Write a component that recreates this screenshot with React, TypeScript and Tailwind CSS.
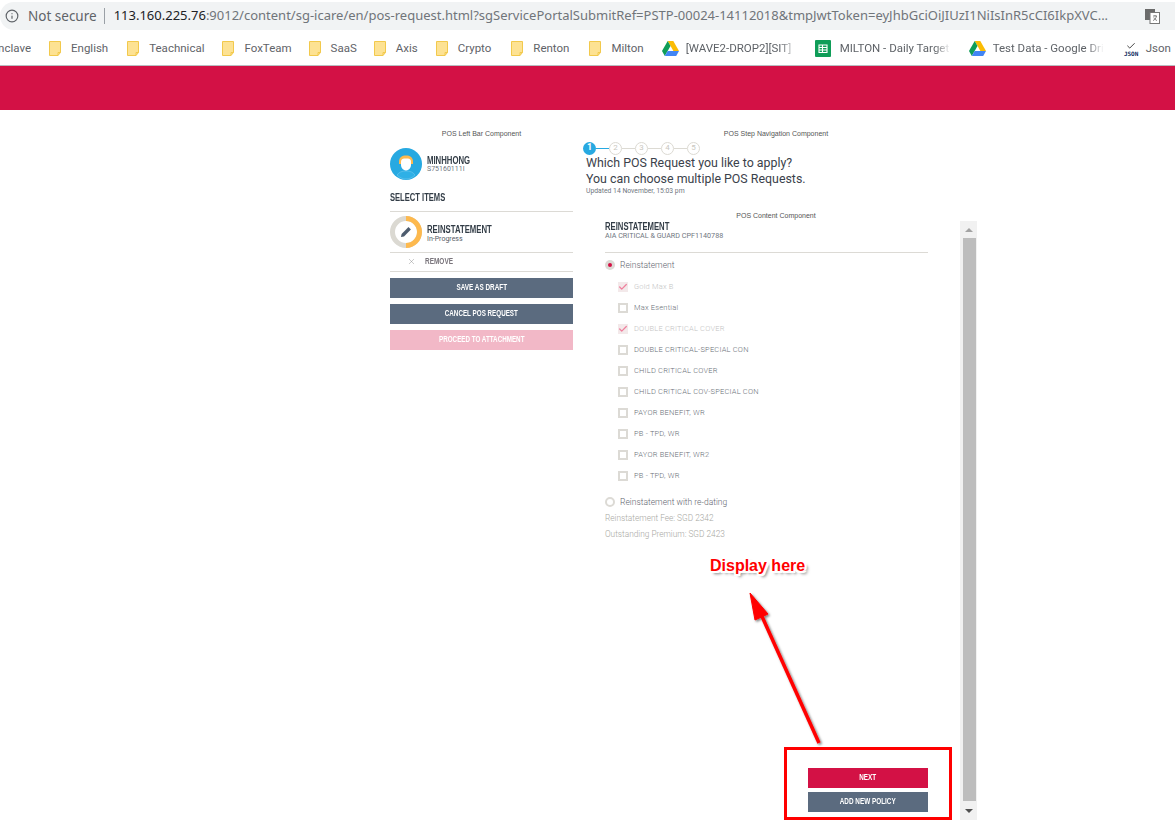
import React from "react";
import { X, Check, Info } from "lucide-react";

const din = "font-['Roboto',sans-serif]";
const cond = "inline-block whitespace-nowrap font-bold font-['Liberation_Sans',sans-serif]";

function Folder() {
  return (
    <svg width="12" height="15" viewBox="0 0 12 15" className="shrink-0">
      <path d="M0.5 0.5H11.5V11.5L9 14.5H0.5Z" fill="#fde293" stroke="#f2c94c" />
      <path d="M9 14.5V11.5H11.5" fill="none" stroke="#f2c94c" />
    </svg>
  );
}

function Drive() {
  return (
    <svg width="17" height="15" viewBox="0 0 17 15" className="shrink-0">
      <path d="M5.7 0H11.3L17 10H11.4Z" fill="#fbbc04" />
      <path d="M5.7 0L0 10L2.8 15L8.5 5Z" fill="#0f9d58" />
      <path d="M5.6 10H17L14.2 15H2.8Z" fill="#4285f4" />
    </svg>
  );
}

function Sheet() {
  return (
    <svg width="16" height="17" viewBox="0 0 16 17" className="shrink-0">
      <rect width="16" height="17" rx="1" fill="#0f9d58" />
      <path d="M4 5H12V12.5H4ZM4 7.5H12M4 10H12M7.5 5V12.5" fill="none" stroke="#fff" strokeWidth="1.1" />
    </svg>
  );
}

function Bookmark({ icon, label, w, className }: { icon: React.ReactNode; label: string; w?: string; className?: string }) {
  return (
    <div className={`flex shrink-0 items-center ${className ?? ""}`}>
      {icon}
      <span className={w ?? "ml-[10px]"}>{label}</span>
    </div>
  );
}

function Step({ n, active }: { n: number; active?: boolean }) {
  return (
    <div
      className={
        active
          ? `flex h-[13px] w-[13px] shrink-0 items-center justify-center rounded-full bg-[#27a9e1] text-[9px] font-bold text-white ${din}`
          : `flex h-[13px] w-[13px] shrink-0 items-center justify-center rounded-full border border-[#dcdad3] text-[8px] text-[#c9c7c0] ${din}`
      }
    >
      {n}
    </div>
  );
}

function Option({ label, checked }: { label: string; checked?: boolean }) {
  return (
    <div className="flex h-[21px] items-center pl-[13px]">
      <div
        className={`flex h-[10px] w-[10px] shrink-0 items-center justify-center border-2 ${
          checked ? "border-[#f3e9ea] bg-[#f3e9ea]" : "border-[#dcdad5] bg-white"
        }`}
      >
        {checked && <Check size={10} strokeWidth={3} className="shrink-0 text-[#ef7f9d]" />}
      </div>
      <span className={`ml-[6px] text-[7.5px] font-light tracking-[0.2px] ${din} ${checked ? "text-[#c4c4c4]" : "text-[#6a7078]"}`}>
        {label}
      </span>
    </div>
  );
}

export default function App() {
  const fade = "overflow-hidden whitespace-nowrap [mask-image:linear-gradient(to_right,black_85%,transparent)]";
  return (
    <div className="relative flex h-[820px] w-[1175px] flex-col overflow-hidden bg-white">
      {/* browser bar */}
      <div className="flex h-[30px] shrink-0 items-end">
        <div className="flex h-[28px] flex-1 items-center rounded-l-full bg-[#f1f3f4] pl-[5px] text-[13.5px] font-['Noto_Sans',sans-serif]">
          <Info size={14} strokeWidth={2} className="text-[#5f6368]" />
          <span className="ml-[9px] text-[#5f6368]">Not secure</span>
          <span className="ml-[7px] h-[16px] w-px bg-[#9aa0a6]" />
          <span className="ml-[9px] w-[1018px] shrink-0 overflow-hidden whitespace-nowrap text-[13px] text-[#70757a]">
            <span className="text-[#202124]">113.160.225.76</span>
            :9012/content/sg-icare/en/pos-request.html?sgServicePortalSubmitRef=PSTP-00024-14112018&amp;tmpJwtToken=eyJhbGciOiJIUzI1NiIsInR5cCI6IkpXVC...
          </span>
          <svg width="15" height="15" viewBox="0 0 15 15" className="ml-[13px] shrink-0">
            <rect x="0" y="0" width="10" height="11" fill="#6b6b6b" />
            <rect x="5" y="3.5" width="9.5" height="11" fill="#fff" stroke="#777" />
            <path d="M8 7H12M10 6V7M11.5 7C11 9.5 9.5 11 8 11.5M8.8 8.5C9.5 10 10.5 11 12 11.5" stroke="#666" fill="none" strokeWidth="0.8" />
          </svg>
        </div>
      </div>
      {/* bookmarks */}
      <div className="flex h-[36px] shrink-0 items-center gap-[18px] overflow-hidden border-b border-[#b8bcc0] pt-[2px] text-[11.5px] text-[#5f6368] font-['Roboto',sans-serif]">
        <div className="flex w-[31px] shrink-0 justify-end overflow-hidden whitespace-nowrap">
          <span>Enclave</span>
        </div>
        <Bookmark icon={<Folder />} label="English" />
        <Bookmark icon={<Folder />} label="Teachnical" className="ml-[1px]" />
        <Bookmark icon={<Folder />} label="FoxTeam" />
        <Bookmark icon={<Folder />} label="SaaS" className="-ml-[1px]" />
        <Bookmark icon={<Folder />} label="Axis" className="-ml-[1px]" />
        <Bookmark icon={<Folder />} label="Crypto" />
        <Bookmark icon={<Folder />} label="Renton" className="ml-[2px]" />
        <Bookmark icon={<Folder />} label="Milton" className="ml-[2px]" />
        <Bookmark icon={<Drive />} label="[WAVE2-DROP2][SIT]" w={`ml-[7px] w-[111px] ${fade}`} />
        <Bookmark icon={<Sheet />} label="MILTON - Daily Target" w={`ml-[9px] w-[111px] ${fade}`} />
        <Bookmark icon={<Drive />} label="Test Data - Google Drive" w={`ml-[7px] w-[111px] ${fade}`} />
        <div className="flex shrink-0 items-center">
          <div className="flex w-[19px] flex-col items-center leading-none">
            <Check size={10} strokeWidth={2} className="text-[#222]" />
            <span className="text-[6px] font-bold text-[#0b2a5c] font-['DejaVu_Sans_Mono',monospace]">JSON</span>
          </div>
          <span className="ml-[5px]">Json</span>
        </div>
      </div>
      {/* red header */}
      <div className="h-[44px] shrink-0 bg-[#d31145]" />
      {/* page */}
      <div className="flex min-h-0 flex-1 pl-[390px]">
        {/* left bar */}
        <div className="w-[183px] shrink-0 pt-[20px]">
          <div className="h-[8px] text-center text-[7px] leading-[8px] text-[#555] font-['Liberation_Sans',sans-serif]">
            POS Left Bar Component
          </div>
          <div className="mt-[10px] flex h-[32px] items-start">
            <svg width="32" height="32" viewBox="0 0 32 32" className="shrink-0">
              <circle cx="16" cy="16" r="16" fill="#27a9e1" />
              <path d="M9 14C9 9 12 7.5 16 7.5S23 9 23 14V16H9Z" fill="#fdb94e" />
              <path d="M11 13.5C11 11 13 10.5 16 10.5S21 11 21 13.5V17C21 20 18.5 22.5 16 22.5S11 20 11 17Z" fill="#fff" />
              <path d="M7 27C9 24 12 23 16 23S23 24 25 27C22 30 19 31 16 31S10 30 7 27Z" fill="#2fb0e6" stroke="#7fcdee" strokeWidth="0.5" />
            </svg>
            <div className="ml-[5px] pt-[4px]">
              <div className="h-[12px] leading-[12px]">
                <span className={`${cond} origin-left scale-x-[.675] text-[11.5px] text-[#333d47]`}>MINHHONG</span>
              </div>
              <div className={`mt-[1px] text-[7px] leading-[8px] text-[#6f7680] ${din}`}>S75160111I</div>
            </div>
          </div>
          <div className="mt-[9px] h-[12px] leading-[12px]">
            <span className={`${cond} origin-left scale-x-[.66] text-[11.5px] text-[#333d47]`}>SELECT ITEMS</span>
          </div>
          <div className="mt-[10px] flex h-[42px] items-center border-y border-[#dcdad5]">
            <div className="relative flex h-[32px] w-[32px] shrink-0 items-center justify-center">
              <svg width="32" height="32" viewBox="0 0 32 32" className="absolute inset-0">
                <circle cx="16" cy="16" r="13.5" fill="none" stroke="#dbd9d2" strokeWidth="5" />
                <path d="M16 2.5A13.5 13.5 0 0 1 16 29.5" fill="none" stroke="#fdb94e" strokeWidth="5" />
                <path d="M11 21L11.6 18L18.5 11.1L20.9 13.5L14 20.4Z" fill="#4d5c6e" />
              </svg>
            </div>
            <div className="ml-[5px]">
              <div className="h-[12px] leading-[12px]">
                <span className={`${cond} origin-left scale-x-[.675] text-[11.5px] text-[#333d47]`}>REINSTATEMENT</span>
              </div>
              <div className={`mt-[2px] text-[7px] leading-[8px] text-[#565d66] ${din}`}>In-Progress</div>
            </div>
          </div>
          <div className="flex h-[19px] items-center border-b border-[#dcdad5] pb-[2px] pl-[17px]">
            <X size={9} strokeWidth={1} className="text-[#777]" />
            <span className={`${cond} ml-[9px] origin-left scale-x-[.68] text-[9.5px] text-[#7a757c]`}>REMOVE</span>
          </div>
          <div className="mt-[6px] flex flex-col gap-[6px] text-[9.5px] text-white">
            <div className="flex h-[20px] items-center justify-center bg-[#5b6b7f] pb-[2px]">
              <span className={`${cond} scale-x-[.67]`}>SAVE AS DRAFT</span>
            </div>
            <div className="flex h-[20px] items-center justify-center bg-[#5b6b7f] pb-[2px]">
              <span className={`${cond} scale-x-[.66]`}>CANCEL POS REQUEST</span>
            </div>
            <div className="flex h-[20px] items-center justify-center bg-[#f2b8c7] pb-[2px]">
              <span className={`${cond} scale-x-[.66]`}>PROCEED TO ATTACHMENT</span>
            </div>
          </div>
        </div>
        {/* right */}
        <div className="ml-[11px] flex w-[394px] shrink-0 flex-col pt-[20px]">
          <div className="pr-[10px] text-center text-[7px] leading-[8px] text-[#555] font-['Liberation_Sans',sans-serif]">
            POS Step Navigation Component
          </div>
          <div className="-ml-[1px] mt-[3px] flex h-[14px] items-center">
            <Step n={1} active />
            <div className="h-px w-[13px] bg-[#27a9e1]" />
            <Step n={2} />
            <div className="h-px w-[13px] bg-[#dcdad3]" />
            <Step n={3} />
            <div className="h-px w-[13px] bg-[#dcdad3]" />
            <Step n={4} />
            <div className="h-px w-[13px] bg-[#dcdad3]" />
            <Step n={5} />
          </div>
          <div className={`ml-[2px] text-[12.4px] leading-[16px] text-[#3b424b] ${din}`}>
            <div>Which POS Request you like to apply?</div>
            <div>You can choose multiple POS Requests.</div>
          </div>
          <div className={`ml-[2px] h-[8px] text-[6.8px] leading-[8px] text-[#6f7680] ${din}`}>Updated 14 November, 15:03 pm</div>
          <div className="mt-[17px] pr-[10px] text-center text-[7px] leading-[8px] text-[#555] font-['Liberation_Sans',sans-serif]">
            POS Content Component
          </div>
          {/* panel */}
          <div className="mt-[1px] flex min-h-0 flex-1">
            <div className="flex w-[376px] flex-col">
              <div className="ml-[21px] mr-[32px] flex flex-1 flex-col">
                <div className="mt-[-3px] h-[12px] leading-[12px]">
                  <span className={`${cond} origin-left scale-x-[.67] text-[11.5px] text-[#333d47]`}>REINSTATEMENT</span>
                </div>
                <div className={`mt-[2px] text-[7.2px] leading-[8px] text-[#6f7680] ${din}`}>AIA CRITICAL &amp; GUARD CPF1140788</div>
                <div className="mt-[12px] border-t border-[#dcdad5]" />
                <div className="mt-[6px] flex h-[12px] items-center">
                  <div className="flex h-[10px] w-[10px] shrink-0 items-center justify-center rounded-full bg-[#dcdad5]">
                    <div className="h-[4px] w-[4px] rounded-full bg-[#d31145]" />
                  </div>
                  <span className={`ml-[5px] text-[8.5px] font-light text-[#5f666f] ${din}`}>Reinstatement</span>
                </div>
                <div className="mt-[5px]">
                  <Option label="Gold Max B" checked />
                  <Option label="Max Esential" />
                  <Option label="DOUBLE CRITICAL COVER" checked />
                  <Option label="DOUBLE CRITICAL-SPECIAL CON" />
                  <Option label="CHILD CRITICAL COVER" />
                  <Option label="CHILD CRITICAL COV-SPECIAL CON" />
                  <Option label="PAYOR BENEFIT, WR" />
                  <Option label="PB - TPD, WR" />
                  <Option label="PAYOR BENEFIT, WR2" />
                  <Option label="PB - TPD, WR" />
                </div>
                <div className="mt-[10px] flex h-[12px] items-center">
                  <div className="h-[10px] w-[10px] shrink-0 rounded-full border-2 border-[#dcdad5]" />
                  <span className={`ml-[5px] text-[8.5px] font-light text-[#5f666f] ${din}`}>Reinstatement with re-dating</span>
                </div>
                <div className={`mt-[2px] h-[16px] text-[8.3px] font-light leading-[16px] text-[#a8a8a3] ${din}`}>Reinstatement Fee: SGD 2342</div>
                <div className={`h-[16px] text-[8.3px] font-light leading-[16px] text-[#a8a8a3] ${din}`}>Outstanding Premium: SGD 2423</div>
                <div className="ml-auto mt-auto mb-[8px] flex w-[120px] flex-col gap-[4px] text-[9.5px] text-white">
                  <div className="flex h-[20px] items-center justify-center bg-[#d31145] pb-[1px]">
                    <span className={`${cond} scale-x-[.67]`}>NEXT</span>
                  </div>
                  <div className="flex h-[20px] items-center justify-center bg-[#5b6b7f] pb-[1px]">
                    <span className={`${cond} scale-x-[.67]`}>ADD NEW POLICY</span>
                  </div>
                </div>
              </div>
            </div>
            {/* scrollbar */}
            <div className="flex w-[17px] flex-col items-center bg-[#f1f1f1]">
              <div className="flex h-[17px] w-full items-center justify-center">
                <div className="h-0 w-0 border-x-[4px] border-b-[4px] border-x-transparent border-b-[#a3a3a3]" />
              </div>
              <div className="ml-[1px] w-[13px] flex-1 bg-[#bdbdbd]" />
              <div className="flex h-[19px] w-full items-center justify-center">
                <div className="h-0 w-0 border-x-[4px] border-t-[4px] border-x-transparent border-t-[#505050]" />
              </div>
            </div>
          </div>
        </div>
      </div>

      {/* annotations */}
      <div className="absolute left-[784px] top-[747px] h-[73px] w-[168px] border-[3px] border-[#ff0000]" />
      <svg className="absolute left-0 top-0" width="1175" height="820" style={{ pointerEvents: "none" }}>
        <defs>
          <filter id="sh" x="-30%" y="-30%" width="160%" height="160%">
            <feDropShadow dx="1.5" dy="1.5" stdDeviation="1.2" floodColor="#000" floodOpacity="0.5" />
          </filter>
        </defs>
        <g filter="url(#sh)">
          <line x1="819" y1="743" x2="760" y2="612" stroke="#ff0000" strokeWidth="3.5" />
          <path d="M750 593L768 614L755 620Z" fill="#ff0000" stroke="#ff0000" />
        </g>
      </svg>
      <div className="absolute left-[710px] top-[556px] text-[16px] font-bold leading-[20px] text-[#ff0000] font-['Liberation_Sans',sans-serif] [text-shadow:-2px_-2px_0_#fff,2px_-2px_0_#fff,-2px_2px_0_#fff,2px_2px_0_#fff,0_-2px_0_#fff,0_2px_0_#fff,-2px_0_0_#fff,2px_0_0_#fff,3px_3px_3px_rgba(0,0,0,0.55)]">
        Display here
      </div>
    </div>
  );
}
